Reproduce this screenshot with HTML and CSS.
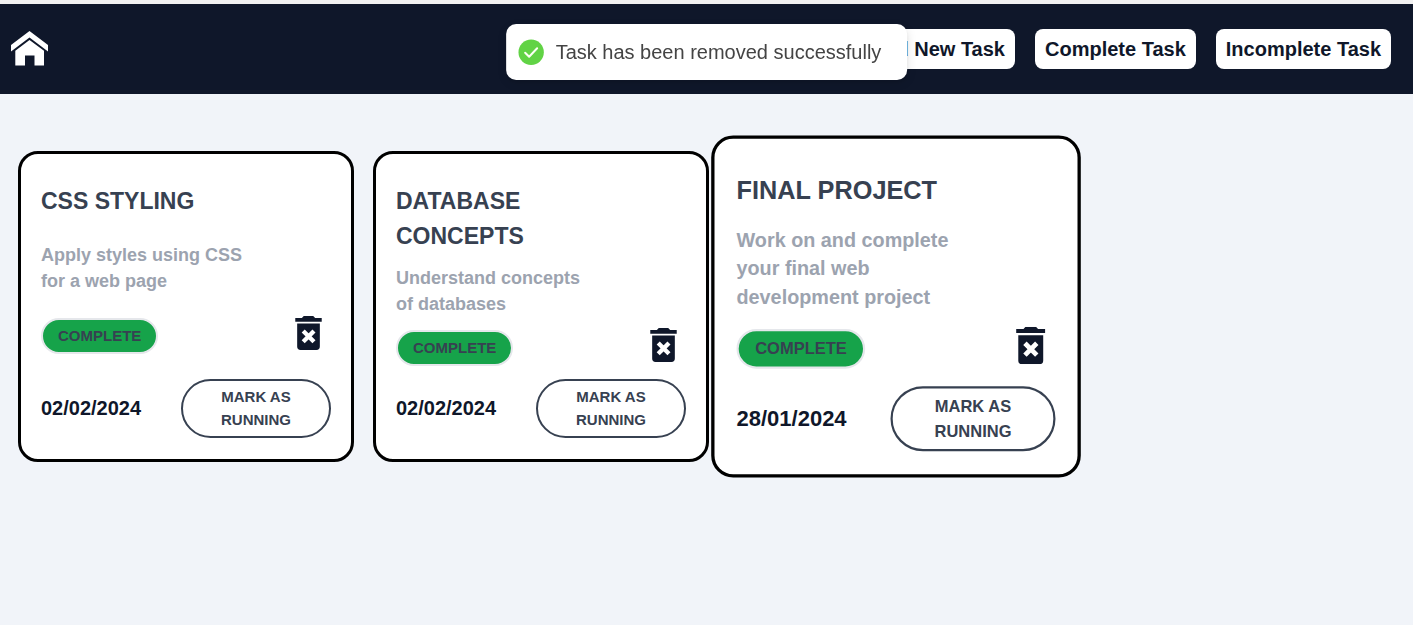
FILE: index.html
```html
<!DOCTYPE html>
<html lang="en">
<head>
<meta charset="utf-8">
<meta name="viewport" content="width=device-width, initial-scale=1">
<title>Tasks</title>
<link rel="stylesheet" href="styles.css">
</head>
<body>
<svg class="sprite" aria-hidden="true">
  <symbol id="trash" viewBox="5 3 14 18">
    <path d="M5 4h3.500l1-1h5l1 1H19v2H5zM6 7h12v12.200a1.800 1.800 0 0 1-1.800 1.800H7.800A1.800 1.800 0 0 1 6 19.200z" fill="#0f172a"/>
    <path d="M9.200 10.900l5.700 5.700m0-5.700l-5.700 5.700" stroke="#fff" stroke-width="2.300" fill="none"/>
  </symbol>
</svg>

<header class="topbar">
  <a class="home" href="#" aria-label="Home">
    <svg viewBox="0 0 37 36" width="37" height="36" fill="#fff" aria-hidden="true">
      <path d="M18.500 0L37 14v6.500L18.500 6.500L0 20.500V14z"/>
      <path d="M18.500 9L33 19.800V34.500h-9.500V24.500H14V34.500H4.300V19.800z"/>
    </svg>
  </a>
  <nav class="nav">
    <a class="nav-link" href="#">Add New Task</a>
    <a class="nav-link" href="#">Complete Task</a>
    <a class="nav-link" href="#">Incomplete Task</a>
  </nav>
</header>

<div class="toast" role="status">
  <svg viewBox="0 0 26 26" width="26" height="26" aria-hidden="true">
    <circle cx="13" cy="13.300" r="12.700" fill="#61d345"/>
    <path d="M7 13.800l4 4 8-8.500" fill="none" stroke="#fcfff4" stroke-width="2" stroke-linecap="round" stroke-linejoin="round"/>
  </svg>
  <span>Task has been removed successfully</span>
</div>

<main class="tasks">
  <article class="card">
    <h2 class="title">CSS STYLING</h2>
    <p class="desc">Apply styles using CSS for a web page</p>
    <div class="status-row">
      <span class="pill">COMPLETE</span>
      <button class="delete" type="button" aria-label="Delete task"><svg width="27" height="34"><use href="#trash"/></svg></button>
    </div>
    <div class="footer-row">
      <time datetime="2024-02-02">02/02/2024</time>
      <button class="mark" type="button">MARK AS RUNNING</button>
    </div>
  </article>

  <article class="card">
    <h2 class="title">DATABASE CONCEPTS</h2>
    <p class="desc">Understand concepts of databases</p>
    <div class="status-row">
      <span class="pill">COMPLETE</span>
      <button class="delete" type="button" aria-label="Delete task"><svg width="27" height="34"><use href="#trash"/></svg></button>
    </div>
    <div class="footer-row">
      <time datetime="2024-02-02">02/02/2024</time>
      <button class="mark" type="button">MARK AS RUNNING</button>
    </div>
  </article>

  <article class="card card-raised">
    <h2 class="title">FINAL PROJECT</h2>
    <p class="desc">Work on and complete your final web development project</p>
    <div class="status-row">
      <span class="pill">COMPLETE</span>
      <button class="delete" type="button" aria-label="Delete task"><svg width="27" height="34"><use href="#trash"/></svg></button>
    </div>
    <div class="footer-row">
      <time datetime="2024-01-28">28/01/2024</time>
      <button class="mark" type="button">MARK AS RUNNING</button>
    </div>
  </article>
</main>
</body>
</html>
```
FILE: styles.css
```css
* {
  box-sizing: border-box;
}

body {
  margin: 0;
  min-height: 100vh;
  background: #f1f4f9;
  color: #0f172a;
  font-family: "Liberation Sans", Arial, sans-serif;
  font-size: 20px;
}

button {
  font: inherit;
  cursor: pointer;
}

.sprite {
  position: absolute;
  width: 0;
  height: 0;
}

.topbar {
  display: flex;
  align-items: center;
  justify-content: space-between;
  padding: 25px 22px 25px 11px;
  border-top: 4px solid #f1f1f1;
  background: #0f172a;
}

.home svg,
.delete svg {
  display: block;
}

.nav {
  display: flex;
  gap: 20px;
}

.nav-link {
  padding: 0 10px;
  border-radius: 8px;
  background: #fff;
  color: #0f172a;
  font-weight: 700;
  line-height: 40px;
  text-decoration: none;
}

.toast {
  position: fixed;
  z-index: 10;
  top: 24px;
  left: 50%;
  transform: translateX(-50%);
  display: flex;
  align-items: center;
  gap: 12px;
  padding: 14px 26px 14px 12px;
  border-radius: 10px;
  background: #fff;
  box-shadow: 0 3px 10px rgba(0, 0, 0, 0.1), 0 3px 3px rgba(0, 0, 0, 0.05);
  color: #444;
  font-size: 20px;
  line-height: 28px;
  white-space: nowrap;
}

.tasks {
  display: flex;
  flex-wrap: wrap;
  gap: 19px;
  padding: 57px 18px;
}

.card {
  display: flex;
  flex-direction: column;
  justify-content: space-between;
  width: 336px;
  min-height: 311px;
  padding: 30px 20px 21px;
  border: 3px solid #000;
  border-radius: 20px;
  background: #fff;
}

.card-raised {
  transform: scale(1.1);
}

.title,
.desc {
  max-width: 204px;
  margin: 0;
  font-weight: 700;
}

.title {
  color: #374151;
  font-size: 23px;
  line-height: 35px;
}

.desc {
  color: #9ca3af;
  font-size: 18px;
  line-height: 26px;
}

.status-row {
  display: flex;
  align-items: flex-start;
  justify-content: space-between;
  height: 40px;
  padding: 0 9px 0 0;
}

.pill {
  align-self: center;
  padding: 0 15px;
  border: 2px solid #e5e7eb;
  border-radius: 18px;
  background: #16a34a;
  color: #374151;
  font-size: 15px;
  font-weight: 700;
  line-height: 32px;
}

.delete {
  padding: 0;
  border: 0;
  background: none;
}

.footer-row {
  display: flex;
  align-items: center;
  justify-content: space-between;
  font-weight: 700;
}

.mark {
  width: 150px;
  padding: 4px 32px 5px;
  border: 2px solid #374151;
  border-radius: 30px;
  background: #fff;
  color: #374151;
  font-size: 15px;
  font-weight: 700;
  line-height: 23px;
}
```
